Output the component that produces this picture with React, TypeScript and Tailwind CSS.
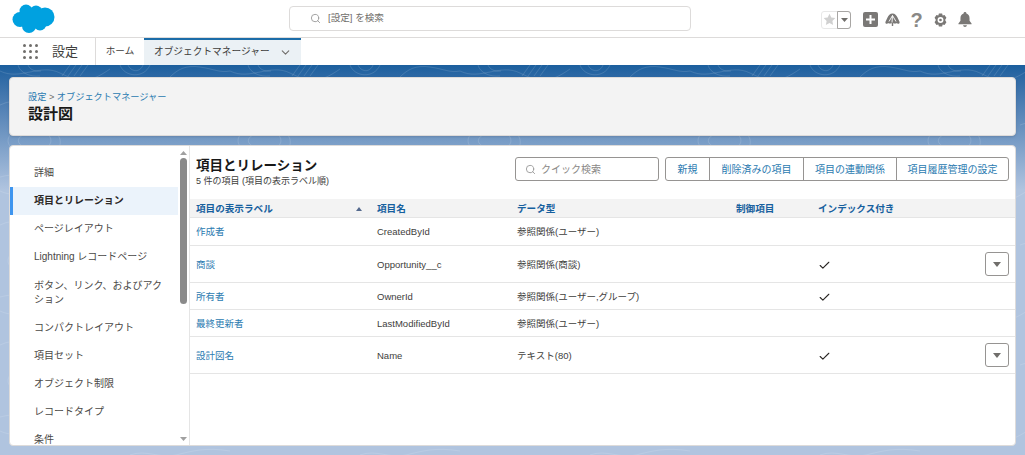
import React from 'react';
import { Search, ChevronDown, Check } from 'lucide-react';

const FONT = '"Liberation Sans", "Noto Sans CJK JP", sans-serif';

const SIDE_ITEMS = [
  '詳細',
  '項目とリレーション',
  'ページレイアウト',
  'Lightning レコードページ',
  'ボタン、リンク、およびアクション',
  'コンパクトレイアウト',
  '項目セット',
  'オブジェクト制限',
  'レコードタイプ',
  '条件',
];

const ROWS = [
  { label: '作成者', api: 'CreatedById', type: '参照関係(ユーザー)', indexed: false, menu: false, h: 'h-[28px]' },
  { label: '商談', api: 'Opportunity__c', type: '参照関係(商談)', indexed: true, menu: true, h: 'h-[37px]' },
  { label: '所有者', api: 'OwnerId', type: '参照関係(ユーザー,グループ)', indexed: true, menu: false, h: 'h-[27px]' },
  { label: '最終更新者', api: 'LastModifiedById', type: '参照関係(ユーザー)', indexed: false, menu: false, h: 'h-[27px]' },
  { label: '設計図名', api: 'Name', type: 'テキスト(80)', indexed: true, menu: true, h: 'h-[37px]' },
];

const BUTTONS = [
  { label: '新規', w: 'w-[44px]' },
  { label: '削除済みの項目', w: 'w-[94px]' },
  { label: '項目の連動関係', w: 'w-[93px]' },
  { label: '項目履歴管理の設定', w: 'w-[111px]' },
];

const COLS = 'grid grid-cols-[181px_140px_219px_82px_1fr] pl-[6px] pt-[2px]';

const Cloud = () => (
  <svg width="43" height="31" viewBox="0 0 43 31" fill="#00a1e0">
    <circle cx="14" cy="8" r="6.5" />
    <circle cx="24" cy="8.500" r="6" />
    <circle cx="33" cy="14" r="9.500" />
    <circle cx="8" cy="16.500" r="7.500" />
    <circle cx="17" cy="23" r="7" />
    <circle cx="28" cy="21" r="6.500" />
    <rect x="9" y="9" width="24" height="14" />
  </svg>
);

// faint contour lines on the page background
const Contours = () => (
  <svg className="absolute inset-0 h-full w-full" xmlns="http://www.w3.org/2000/svg">
    <defs>
      <pattern id="contour" width="230" height="120" patternUnits="userSpaceOnUse">
        <g fill="none" stroke="#fff" strokeOpacity="0.16" strokeWidth="0.8">
          <path d="M0 6c20 10 40-8 60 2s30 10 50-4" />
          <path d="M18 0c2 8 12 12 22 11M28 0c2 5 8 7 13 6M70 0l-8 11M76 0l-8 11M82 0l-8 11M88 0l-8 11" />
          <path d="M120 0c4 12 24 14 30 0M128 0c3 7 12 8 15 0M170 12c8-8 16-12 30-10s20 6 30 4" />
          <path d="M10 70c14-14 40-12 48 0s-6 24-22 22-34-10-26-22z" />
          <path d="M20 72c10-8 26-8 30 0s-6 14-15 13-21-6-15-13z" />
          <path d="M100 60c20-8 40 8 60 4s40-14 70-6" />
          <path d="M110 100c12-12 34-14 44-2s-4 22-18 20-36-6-26-18z" />
          <path d="M180 90c10-6 28-6 36 2s-4 16-14 16-32-12-22-18z" />
          <path d="M0 112c30-8 60 6 90 0" />
          <path d="M0 40c16-8 30 0 46-4s30-8 48-2M130 30c16-6 30 4 46 0s30-8 54-4" />
        </g>
      </pattern>
    </defs>
    <rect width="100%" height="100%" fill="url(#contour)" />
  </svg>
);

const HeaderIcons = () => (
  <div className="mt-[2px] flex items-center">
    <div className="flex h-[18px] w-[30px] rounded-[3px] border border-[#e8e8e8] bg-white">
      <div className="flex w-[16px] items-center justify-center">
        <svg width="13" height="13" viewBox="0 0 24 24" fill="#d0d0d0"><path d="M12 1.500l3.300 6.900 7.500 1-5.500 5.200 1.400 7.500L12 18.500l-6.700 3.600 1.400-7.500L1.200 9.400l7.500-1z" /></svg>
      </div>
      <div className="-my-px -mr-px flex w-[14px] items-center justify-center rounded-r-[3px] border border-[#a8a6a4]">
        <svg width="7" height="4" viewBox="0 0 7 4" fill="#706e6b"><path d="M0 0h7L3.500 4z" /></svg>
      </div>
    </div>
    <div className="ml-[12px] flex h-[15px] w-[15px] items-center justify-center rounded-[2px] bg-[#7a7876]">
      <svg width="11" height="11" viewBox="0 0 11 11" fill="#fff"><path d="M4.500 1h2v3.500H10v2H6.500V10h-2V6.500H1v-2h3.500z" /></svg>
    </div>
    <svg className="ml-[7px]" width="15" height="14" viewBox="0 0 15 14" fill="#7a7876">
      <path d="M7.500 0.500c2.500 0 4 1.800 5 4l2 4.200c.5 1.300-.5 2.300-1.700 2-.9-.6-1.800-.6-2.600 0-.6-.4-1.300-.6-2-.4V13h-1.400v-2.700c-.7-.2-1.400 0-2 .4-.8-.6-1.700-.6-2.600 0-1.200.3-2.200-.7-1.700-2l2-4.200c1-2.200 2.500-4 5-4z" />
      <path d="M7.500 2.500L7 9.500M7.500 2.500L4 8.500M7.500 2.500L11 8.500" fill="none" stroke="#fff" strokeWidth="0.9" />
    </svg>
    <span className="ml-[9px] w-[15px] text-center text-[20px] leading-[20px] font-semibold text-[#8a8886]">?</span>
    <svg className="ml-[10px]" width="13" height="14" viewBox="0 0 24 26" fill="#7a7876">
      <path fillRule="evenodd" d="M9 1h6l1 3.500 3.500-1L23 9l-2.500 4 2.500 4-3.500 5.500-3.500-1L15 25H9l-1-3.500-3.500 1L1 17l2.500-4L1 9l3.500-5.500 3.500 1zM12 7.500a5.500 5.500 0 100 11 5.500 5.500 0 000-11zm0 3a2.500 2.500 0 110 5 2.500 2.500 0 010-5z" />
    </svg>
    <svg className="ml-[11px]" width="14" height="15" viewBox="0 0 16 17" fill="#7a7876">
      <path d="M8 0c1 0 1.600.7 1.600 1.600C12 2.300 13.200 4.300 13.200 7v3l2.300 3v1H.5v-1l2.300-3V7c0-2.700 1.200-4.700 3.600-5.400C6.400.7 7 0 8 0z" />
      <path d="M5.800 15h4.400c-.2 1.200-1 2-2.200 2s-2-.8-2.200-2z" />
    </svg>
  </div>
);

const TopBar = () => (
  <div className="flex h-[38px] items-center border-b border-[#dddbda] bg-white">
    <div className="ml-[12px]"><Cloud /></div>
    <div className="ml-[234px] flex h-[25px] w-[402px] items-center rounded-[4px] border border-[#dddbda] bg-white">
      <Search size={11} className="ml-[20px] text-[#9a9a9a]" />
      <span className="ml-[7px] text-[9.600px] text-[#706e6b]">[設定] を検索</span>
    </div>
    <div className="mr-[53px] ml-auto"><HeaderIcons /></div>
  </div>
);

const NavBar = () => (
  <div className="flex h-[27px] items-stretch bg-white">
    <div className="ml-[23px] flex w-[73px] items-center border-r border-[#dddbda]">
      <div className="grid grid-cols-3 gap-[3px]">
        {Array.from({ length: 9 }).map((_, i) => (
          <span key={i} className="h-[3px] w-[3px] rounded-full bg-[#706e6b]" />
        ))}
      </div>
      <span className="ml-[14px] text-[13px] text-[#3e3e3c]">設定</span>
    </div>
    <div className="flex w-[48px] items-center justify-center text-[9.600px] text-[#3e3e3c]">ホーム</div>
    <div className="flex w-[157px] items-center border-t-[2px] border-[#1b6ca8] bg-[#ebf1f5] pl-[10px] text-[9.700px] text-[#3e3e3c]">
      オブジェクトマネージャー
      <ChevronDown size={13} className="ml-[9px] text-[#706e6b]" />
    </div>
  </div>
);

const PageHeader = () => (
  <div className="h-[59px] rounded-[4px] border border-[#dddbda] bg-[#f3f3f3] px-[18px] pt-[13px] shadow-sm">
    <div className="text-[9.200px] leading-[12px] text-[#706e6b]">
      <span className="text-[#2a7ab0]">設定</span> &gt; <span className="text-[#2a7ab0]">オブジェクトマネージャー</span>
    </div>
    <div className="mt-[1px] text-[15px] leading-[20px] font-bold text-[#181818]">設計図</div>
  </div>
);

const Sidebar = () => (
  <aside className="flex w-[180px] shrink-0 border-r border-[#e5e5e5]">
    <div className="h-[300px] w-[168px] shrink-0 overflow-hidden pt-[13px]">
      {SIDE_ITEMS.map((item, i) => (
        <div
          key={item}
          className={
            'flex min-h-[28px] items-center border-l-[3px] pl-[21px] pr-[14px] text-[10px] leading-[14px] ' +
            (i === 4 ? 'py-[7.500px] ' : '') +
            (i === 1 ? 'border-[#3e95ef] bg-[#ebf3fb] font-bold text-[#2b2826]' : 'border-transparent text-[#4a4846]')
          }
        >
          {item}
        </div>
      ))}
    </div>
    <div className="flex w-[11px] flex-col items-center pt-[5px]">
      <svg width="7" height="4" viewBox="0 0 7 4" fill="#a0a0a0"><path d="M3.500 0L7 4H0z" /></svg>
      <div className="mt-[3px] h-[146px] w-[7px] rounded-full bg-[#8a8a8a]" />
      <div className="flex-1" />
      <svg className="mb-[4px]" width="7" height="4" viewBox="0 0 7 4" fill="#a0a0a0"><path d="M0 0h7L3.500 4z" /></svg>
    </div>
  </aside>
);

const FieldTable = () => (
  <div className="mt-[12px]">
    <div className={COLS + ' h-[19px] items-center border-b border-[#e5e5e5] bg-[#f3f3f3] text-[9.600px] font-bold text-[#16609e]'}>
      <div className="flex items-center justify-between pr-[15px]">
        項目の表示ラベル
        <svg width="6" height="4" viewBox="0 0 6 4" fill="#54698d"><path d="M3 0l3 4H0z" /></svg>
      </div>
      <div>項目名</div>
      <div>データ型</div>
      <div>制御項目</div>
      <div>インデックス付き</div>
    </div>
    {ROWS.map((row) => (
      <div key={row.label} className={COLS + ' ' + row.h + ' items-center border-b border-[#e5e5e5] text-[9.500px] text-[#3e3e3c]'}>
        <div className="text-[#2a7ab0]">{row.label}</div>
        <div>{row.api}</div>
        <div>{row.type}</div>
        <div />
        <div className="flex items-center justify-between pr-[6px]">
          {row.indexed ? <Check size={13} strokeWidth={2} className="text-[#2b2826]" /> : <span />}
          {row.menu && (
            <div className="flex h-[24px] w-[24px] -translate-y-[1px] items-center justify-center rounded-[3px] border border-[#969492] bg-white">
              <svg width="8" height="5" viewBox="0 0 8 5" fill="#706e6b"><path d="M0 0h8L4 5z" /></svg>
            </div>
          )}
        </div>
      </div>
    ))}
  </div>
);

const Toolbar = () => (
  <div className="flex items-start justify-between pl-[6px] pr-[6px] pt-[11px]">
    <div>
      <h1 className="text-[13.500px] leading-[18px] font-bold text-[#181818]">項目とリレーション</h1>
      <p className="text-[9px] leading-[12px] text-[#3e3e3c]">5 件の項目 (項目の表示ラベル順)</p>
    </div>
    <div className="flex items-center gap-[6px]">
      <div className="flex h-[24px] w-[144px] items-center rounded-[3px] border border-[#969492] bg-white pl-[9px]">
        <Search size={11} className="text-[#9a9a9a]" />
        <span className="ml-[5px] text-[10px] text-[#8a8886]">クイック検索</span>
      </div>
      <div className="flex h-[24px] divide-x divide-[#969492] rounded-[3px] border border-[#969492] bg-white text-[10px] text-[#2a7ab0]">
        {BUTTONS.map((b) => (
          <span key={b.label} className={'flex items-center justify-center ' + b.w}>{b.label}</span>
        ))}
      </div>
    </div>
  </div>
);

export default function App() {
  return (
    <div className="h-[455px] w-[1025px] overflow-hidden bg-[#b0c4df]" style={{ fontFamily: FONT }}>
      <TopBar />
      <NavBar />
      <div className="relative h-[390px] bg-gradient-to-b from-[#1b5f9e] to-[#b0c4df] to-[32%] px-[9px] pt-[12px]">
        <Contours />
        <div className="relative w-[1007px]">
          <PageHeader />
          <div className="mt-[9px] flex h-[301px] overflow-hidden rounded-[4px] border border-[#dddbda] bg-white">
            <Sidebar />
            <main className="min-w-0 flex-1">
              <Toolbar />
              <FieldTable />
            </main>
          </div>
        </div>
      </div>
    </div>
  );
}
